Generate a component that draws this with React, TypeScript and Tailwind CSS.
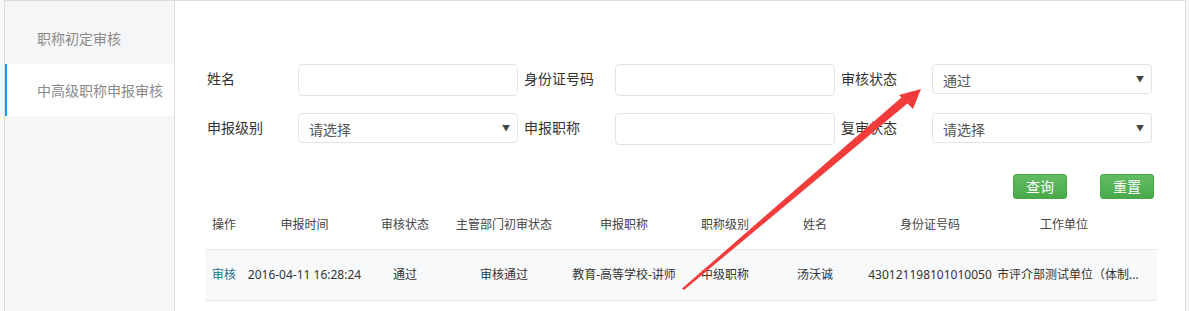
const font = { fontFamily: '"Noto Sans", "Noto Sans CJK SC", sans-serif' };

const SelectBox = ({ value }: { value: string }) => (
  <div className="flex h-[30px] w-[220px] items-center justify-between rounded-[4px] border border-[#e3e3e3] bg-white pl-[10px] pr-[7px] text-[14px] text-[#555]">
    <span className="mt-[3px]">{value}</span>
    <span className="text-[8px] text-[#444]">▼</span>
  </div>
);

const InputBox = () => (
  <div className="h-[32px] w-[220px] rounded-[4px] border border-[#e3e3e3] bg-white" />
);

const Field = ({ label, children }: { label: string; children: React.ReactNode }) => (
  <div className="flex items-start">
    <label className="w-[91px] pt-[4px] text-[14px] text-[#333]">{label}</label>
    {children}
  </div>
);

const cols = [38, 123, 78, 120, 120, 82, 98, 132, 161];
const headCols = [38, 123, 78, 120, 120, 82, 98, 132, 136];
const headers = ['操作', '申报时间', '审核状态', '主管部门初审状态', '申报职称', '职称级别', '姓名', '身份证号码', '工作单位'];
const row = ['审核', '2016-04-11 16:28:24', '通过', '审核通过', '教育-高等学校-讲师', '中级职称', '汤沃诚', '430121198101010050', '市评介部测试单位（体制...'];

const GreenButton = ({ text }: { text: string }) => (
  <button className="h-[25px] w-[54px] rounded-[3px] border border-[#48a648] bg-gradient-to-b from-[#62bd62] to-[#4aa84a] text-[14px] text-white">
    {text}
  </button>
);

export default function App() {
  return (
    <div className="relative h-[311px] w-[1190px] overflow-hidden bg-[#f7f7f8]" style={font}>
      <div className="ml-[4px] flex h-[311px] w-[1182px] border-l border-t border-r border-[#dcdcdc] bg-white">
        {/* sidebar */}
        <aside className="w-[170px] shrink-0 border-r border-[#dcdcdc] bg-[#f5f6f8] pt-[11px] text-[14px] text-[#8a8a8a]">
          <div className="flex h-[52px] items-center pl-[32px]">职称初定审核</div>
          <div className="flex h-[52px] items-center border-l-2 border-[#1e9be8] bg-white pl-[30px]">中高级职称申报审核</div>
        </aside>

        {/* main */}
        <main className="flex-1 pl-[32px] pt-[63px]">
          <div className="grid grid-cols-[311px_311px_311px] gap-x-[6px] gap-y-[17px]">
            <Field label="姓名"><InputBox /></Field>
            <Field label="身份证号码"><InputBox /></Field>
            <Field label="审核状态"><SelectBox value="通过" /></Field>
            <Field label="申报级别"><SelectBox value="请选择" /></Field>
            <Field label="申报职称"><InputBox /></Field>
            <Field label="复审状态"><SelectBox value="请选择" /></Field>
          </div>

          <div className="mt-[29px] flex w-[947px] justify-end gap-[33px]">
            <GreenButton text="查询" />
            <GreenButton text="重置" />
          </div>

          <div className="ml-[-2px] mt-[1px] w-[952px] text-[12px]">
            <div className="flex h-[50px] items-center border-b border-[#e8e8e8] text-[#444]">
              {headers.map((h, i) => (
                <div key={h} className="whitespace-nowrap text-center" style={{ width: headCols[i] }}>{h}</div>
              ))}
            </div>
            <div className="flex h-[51px] items-center border-b border-[#e8e8e8] bg-[#f8f9fb] text-[#333]">
              {row.map((c, i) => (
                <div
                  key={i}
                  className={
                    i === 0
                      ? 'text-center text-[#1f6b8f]'
                      : i === 8
                      ? 'whitespace-nowrap pl-[1px]'
                      : 'whitespace-nowrap text-center'
                  }
                  style={{ width: cols[i] }}
                >
                  {c}
                </div>
              ))}
            </div>
          </div>
        </main>
      </div>

      {/* annotation arrow */}
      <svg className="pointer-events-none absolute left-0 top-0" width="1190" height="311">
        <polygon points="682,288.5 684,290 908,103 902,97" fill="#f23c3c" />
        <polygon points="921,89 899,95 913,109" fill="#f23c3c" />
      </svg>
    </div>
  );
}
